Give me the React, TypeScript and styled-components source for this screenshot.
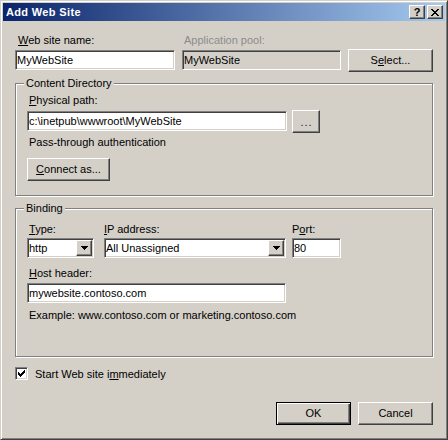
import React from "react";
import styled, { createGlobalStyle, css } from "styled-components";

const Global = createGlobalStyle`
  html, body { margin: 0; padding: 0; background: #d4d0c8; }
  body { font-family: "Liberation Sans", Arial, sans-serif; font-size: 11px; color: #000; }
  * { box-sizing: border-box; }
`;

const raised = css`
  background: #d4d0c8;
  border: 1px solid;
  border-color: #ffffff #404040 #404040 #ffffff;
  box-shadow: inset -1px -1px 0 #808080, inset 1px 1px 0 #d4d0c8;
`;

const sunken = css`
  border: 1px solid;
  border-color: #808080 #ffffff #ffffff #808080;
  box-shadow: inset 1px 1px 0 #404040, inset -1px -1px 0 #d4d0c8;
`;

const Window = styled.div`
  width: 448px;
  height: 440px;
  background: #d4d0c8;
  border: 1px solid;
  border-color: #d4d0c8 #404040 #404040 #d4d0c8;
  box-shadow: inset 1px 1px 0 #ffffff, inset -1px -1px 0 #808080;
  padding: 2px;
  display: flex;
  flex-direction: column;
`;

const TitleBar = styled.div`
  height: 18px;
  flex: none;
  display: flex;
  align-items: center;
  padding: 0 2px 0 3px;
  background: linear-gradient(to right, #0a246a, #a6caf0);
  color: #fff;
  font-weight: bold;
  font-size: 11px;
  letter-spacing: 0.35px;
`;

const TitleText = styled.div`
  flex: 1;
  line-height: 18px;
  white-space: nowrap;
`;

const CaptionButton = styled.div`
  ${raised};
  width: 16px;
  height: 14px;
  margin-left: 2px;
  display: flex;
  align-items: center;
  justify-content: center;
  color: #000;
  font-weight: bold;
  font-size: 11px;
  letter-spacing: 0;
  line-height: 12px;
`;

const Body = styled.div`
  flex: 1;
  display: flex;
  flex-direction: column;
  padding: 13px 12px 0 12px;
`;

const TopGrid = styled.div`
  display: grid;
  grid-template-columns: 160px 159px 85px;
  column-gap: 7px;
  row-gap: 3px;
  align-items: start;
`;

const Label = styled.div<{ $inset?: number; $disabled?: boolean }>`
  height: 13px;
  line-height: 13px;
  padding-left: ${(p) => (p.$inset ?? 2)}px;
  color: ${(p) => (p.$disabled ? "#8c8c8c" : "#000")};
  white-space: nowrap;
`;

const Key = styled.span`
  text-decoration: underline;
  text-underline-offset: 1px;
`;

const Field = styled.div<{ $width?: number; $readOnly?: boolean }>`
  ${sunken};
  width: ${(p) => (p.$width ? `${p.$width}px` : "100%")};
  height: 20px;
  padding: 1px;
  background: ${(p) => (p.$readOnly ? "#d4d0c8" : "#ffffff")};
  display: flex;
  align-items: center;
  line-height: 16px;
  white-space: nowrap;
  overflow: hidden;
`;

const FieldText = styled.span`
  flex: 1;
  padding-left: 0;
`;

const DropButton = styled.div`
  ${raised};
  width: 16px;
  height: 16px;
  flex: none;
  display: flex;
  align-items: center;
  justify-content: center;
`;

const Button = styled.button<{ $width: number; $default?: boolean }>`
  ${raised};
  width: ${(p) => p.$width}px;
  height: 23px;
  padding: 0;
  margin: 0;
  font-family: "Liberation Sans", Arial, sans-serif;
  font-size: 11px;
  color: #000;
  line-height: 13px;
  ${(p) =>
    p.$default &&
    css`
      border: 1px solid #000;
      box-shadow: inset 1px 1px 0 #ffffff, inset -1px -1px 0 #404040,
        inset -2px -2px 0 #808080;
    `}
`;

const GridButton = styled(Button)`
  margin-top: -1px;
`;

const Group = styled.div<{ $top: number; $pt: number; $pb: number }>`
  position: relative;
  margin-top: ${(p) => p.$top}px;
  border: 1px solid #808080;
  box-shadow: inset 1px 1px 0 #ffffff, 1px 1px 0 #ffffff;
  padding: ${(p) => p.$pt}px 11px ${(p) => p.$pb}px 11px;
  display: flex;
  flex-direction: column;
  align-items: flex-start;
`;

const GroupCaption = styled.div`
  position: absolute;
  top: -7px;
  left: 8px;
  padding: 0 2px;
  height: 13px;
  line-height: 13px;
  background: #d4d0c8;
  white-space: nowrap;
`;

const PathRow = styled.div`
  margin-top: 4px;
  display: flex;
  align-items: flex-start;
  gap: 5px;
`;

const PathButton = styled(Button)`
  margin-top: -1px;
  letter-spacing: 1px;
  padding-left: 1px;
  padding-top: 2px;
  color: #101060;
`;

const Note = styled.div<{ $top: number }>`
  margin-top: ${(p) => p.$top}px;
  height: 13px;
  line-height: 13px;
  padding-left: 2px;
  white-space: nowrap;
`;

const Spaced = styled.div<{ $top: number }>`
  margin-top: ${(p) => p.$top}px;
`;

const BindingGrid = styled.div`
  display: grid;
  grid-template-columns: 67px 182px 49px;
  column-gap: 10px;
  row-gap: 2px;
  align-items: start;
  & > :nth-child(3n) {
    margin-left: -4px;
  }
`;

const HostBlock = styled.div`
  margin-top: 9px;
  display: flex;
  flex-direction: column;
  gap: 3px;
`;

const CheckRow = styled.div`
  margin-top: 10px;
  display: flex;
  align-items: center;
  gap: 7px;
  height: 13px;
`;

const CheckBox = styled.div`
  ${sunken};
  width: 13px;
  height: 13px;
  background: #fff;
  display: flex;
  align-items: center;
  justify-content: center;
  flex: none;
`;

const CheckLabel = styled.div`
  line-height: 13px;
  margin-top: 1px;
  white-space: nowrap;
`;

const Footer = styled.div`
  margin-top: 22px;
  display: flex;
  justify-content: flex-end;
  gap: 7px;
`;

const Arrow = () => (
  <svg width="7" height="4" viewBox="0 0 7 4" shapeRendering="crispEdges">
    <rect x="0" y="0" width="7" height="1" fill="#000" />
    <rect x="1" y="1" width="5" height="1" fill="#000" />
    <rect x="2" y="2" width="3" height="1" fill="#000" />
    <rect x="3" y="3" width="1" height="1" fill="#000" />
  </svg>
);

const Check = () => (
  <svg width="7" height="7" viewBox="0 0 7 7" shapeRendering="crispEdges">
    {[2, 3, 4, 3, 2, 1, 0].map((y, x) => (
      <rect key={x} x={x} y={y} width="1" height="3" fill="#000" />
    ))}
  </svg>
);

const CloseGlyph = () => (
  <svg width="8" height="7" viewBox="0 0 8 7" shapeRendering="crispEdges">
    {[0, 1, 2, 3, 4, 5, 6].map((i) => (
      <React.Fragment key={i}>
        <rect x={i} y={i} width="2" height="1" fill="#000" />
        <rect x={6 - i} y={i} width="2" height="1" fill="#000" />
      </React.Fragment>
    ))}
  </svg>
);

const Select: React.FC<{ value: string; width?: number }> = ({ value, width }) => (
  <Field $width={width}>
    <FieldText>{value}</FieldText>
    <DropButton>
      <Arrow />
    </DropButton>
  </Field>
);

export default function App() {
  return (
    <>
      <Global />
      <Window>
        <TitleBar>
          <TitleText>Add Web Site</TitleText>
          <CaptionButton>?</CaptionButton>
          <CaptionButton>
            <CloseGlyph />
          </CaptionButton>
        </TitleBar>
        <Body>
          <TopGrid>
            <Label $inset={3}>
              <Key>W</Key>eb site name:
            </Label>
            <Label $inset={2} $disabled>
              Application pool:
            </Label>
            <div />
            <Field>
              <FieldText>MyWebSite</FieldText>
            </Field>
            <Field $readOnly>
              <FieldText>MyWebSite</FieldText>
            </Field>
            <GridButton $width={85}>
              S<Key>e</Key>lect...
            </GridButton>
          </TopGrid>

          <Group $top={11} $pt={10} $pb={14}>
            <GroupCaption>Content Directory</GroupCaption>
            <Label>
              <Key>P</Key>hysical path:
            </Label>
            <PathRow>
              <Field $width={260}>
                <FieldText>c:\inetpub\wwwroot\MyWebSite</FieldText>
              </Field>
              <PathButton $width={28}>...</PathButton>
            </PathRow>
            <Note $top={3}>Pass-through authentication</Note>
            <Spaced $top={9}>
              <Button $width={83}>
                <Key>C</Key>onnect as...
              </Button>
            </Spaced>
          </Group>

          <Group $top={12} $pt={14} $pb={34}>
            <GroupCaption>Binding</GroupCaption>
            <BindingGrid>
              <Label>
                <Key>T</Key>ype:
              </Label>
              <Label $inset={0}>
                <Key>I</Key>P address:
              </Label>
              <Label $inset={0}>
                P<Key>o</Key>rt:
              </Label>
              <Select value="http" />
              <Select value="All Unassigned" />
              <Field>
                <FieldText>80</FieldText>
              </Field>
            </BindingGrid>
            <HostBlock>
              <Label>
                <Key>H</Key>ost header:
              </Label>
              <Field $width={259}>
                <FieldText>mywebsite.contoso.com</FieldText>
              </Field>
            </HostBlock>
            <Note $top={6}>Example: www.contoso.com or marketing.contoso.com</Note>
          </Group>

          <CheckRow>
            <CheckBox>
              <Check />
            </CheckBox>
            <CheckLabel>
              Start Web site i<Key>m</Key>mediately
            </CheckLabel>
          </CheckRow>

          <Footer>
            <Button $width={75} $default>
              OK
            </Button>
            <Button $width={75}>Cancel</Button>
          </Footer>
        </Body>
      </Window>
    </>
  );
}
